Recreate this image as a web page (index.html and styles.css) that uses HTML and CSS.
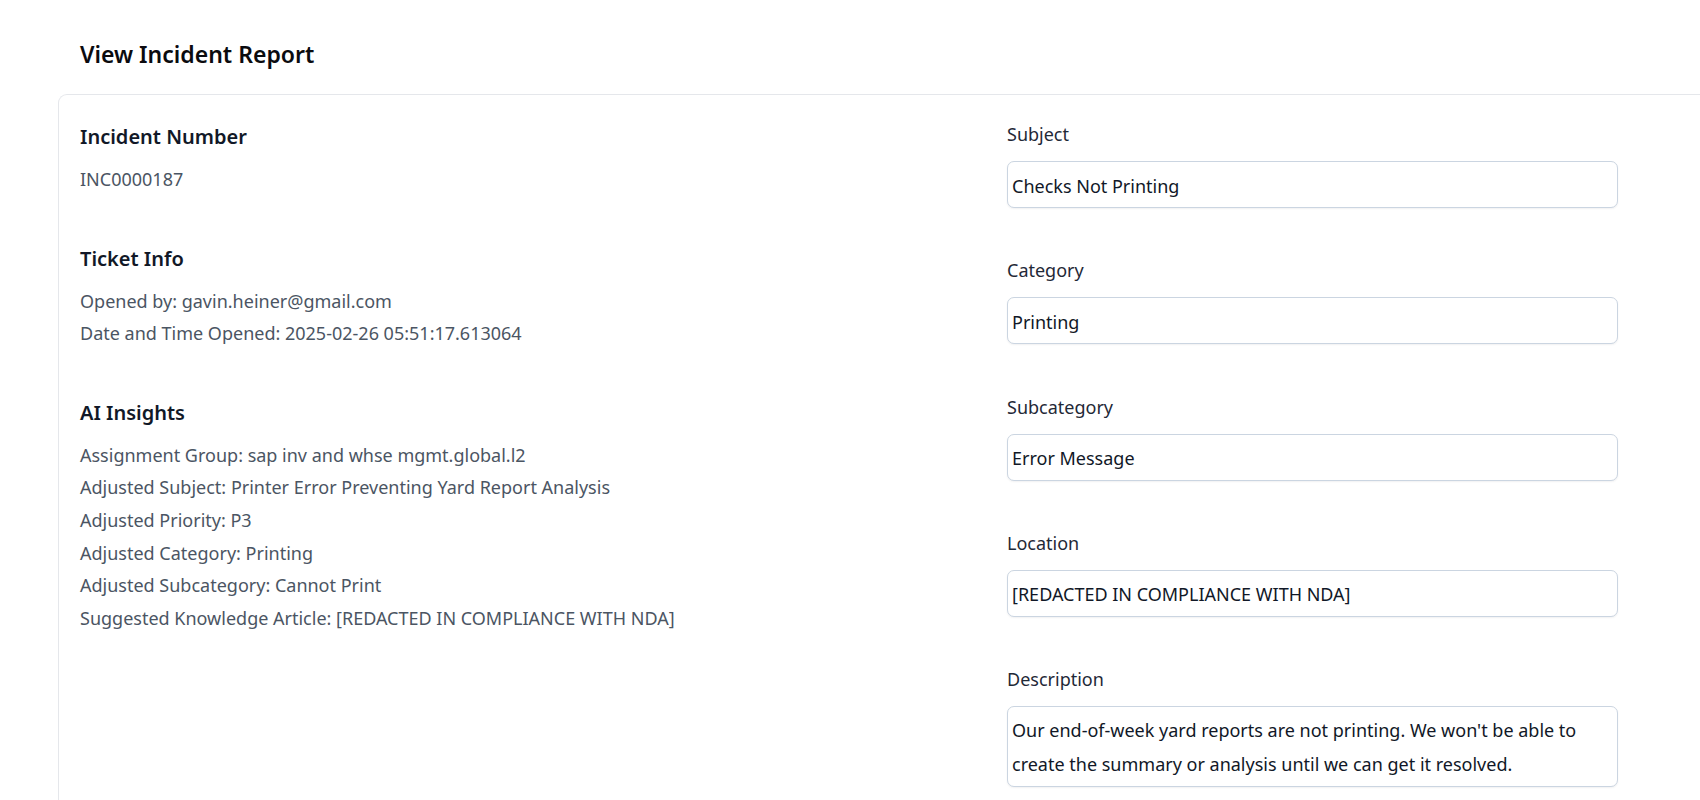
FILE: index.html
```html
<!DOCTYPE html>
<html lang="en">
<head>
<meta charset="utf-8">
<title>View Incident Report</title>
<link rel="stylesheet" href="styles.css">
</head>
<body>
<main class="page">
  <h1 class="page-title">View Incident Report</h1>
  <section class="card">
    <div class="info-col">
      <div class="info-section">
        <h2 class="info-title">Incident Number</h2>
        <p class="info-line">INC0000187</p>
      </div>
      <div class="info-section">
        <h2 class="info-title">Ticket Info</h2>
        <p class="info-line">Opened by: gavin.heiner@gmail.com</p>
        <p class="info-line">Date and Time Opened: 2025-02-26 05:51:17.613064</p>
      </div>
      <div class="info-section">
        <h2 class="info-title">AI Insights</h2>
        <p class="info-line">Assignment Group: sap inv and whse mgmt.global.l2</p>
        <p class="info-line">Adjusted Subject: Printer Error Preventing Yard Report Analysis</p>
        <p class="info-line">Adjusted Priority: P3</p>
        <p class="info-line">Adjusted Category: Printing</p>
        <p class="info-line">Adjusted Subcategory: Cannot Print</p>
        <p class="info-line">Suggested Knowledge Article: [REDACTED IN COMPLIANCE WITH NDA]</p>
      </div>
    </div>
    <form class="form-col">
      <div class="field">
        <label class="field-label" for="subject">Subject</label>
        <input class="field-input" id="subject" type="text" value="Checks Not Printing" readonly>
      </div>
      <div class="field">
        <label class="field-label" for="category">Category</label>
        <input class="field-input" id="category" type="text" value="Printing" readonly>
      </div>
      <div class="field">
        <label class="field-label" for="subcategory">Subcategory</label>
        <input class="field-input" id="subcategory" type="text" value="Error Message" readonly>
      </div>
      <div class="field">
        <label class="field-label" for="location">Location</label>
        <input class="field-input" id="location" type="text" value="[REDACTED IN COMPLIANCE WITH NDA]" readonly>
      </div>
      <div class="field">
        <label class="field-label" for="description">Description</label>
        <textarea class="field-input field-textarea" id="description" rows="2" readonly>Our end-of-week yard reports are not printing. We won't be able to create the summary or analysis until we can get it resolved.</textarea>
      </div>
    </form>
  </section>
</main>
</body>
</html>
```
FILE: styles.css
```css
* {
  box-sizing: border-box;
}

html, body {
  margin: 0;
  padding: 0;
  background: #ffffff;
  overflow: hidden;
}

body {
  font-family: "Noto Sans", "Open Sans", sans-serif;
  color: #111827;
}

.page {
  padding: 38px 0 0 58px;
}

.page-title {
  margin: 0 0 24px 0;
  padding-left: 22px;
  font-size: 23px;
  line-height: 32px;
  font-weight: 600;
  color: #0b0b0f;
}

.card {
  display: grid;
  grid-template-columns: 1fr 611px;
  border: 1px solid #e5e7eb;
  border-right: none;
  border-radius: 9px 0 0 9px;
  padding: 24px 82px 40px 21px;
  min-height: 760px;
  background: #ffffff;
}

.info-col {
  display: flex;
  flex-direction: column;
  gap: 45px;
}

.info-title {
  margin: 0 0 8px 0;
  font-size: 20px;
  line-height: 36px;
  font-weight: 600;
  color: #111827;
}

.info-line {
  margin: 0;
  font-size: 18px;
  line-height: 32.6px;
  color: #4b5563;
}

.form-col {
  display: flex;
  flex-direction: column;
  gap: 47.3px;
  margin: 0;
}

.field {
  display: flex;
  flex-direction: column;
}

.field-label {
  margin-bottom: 12px;
  font-size: 18px;
  line-height: 30px;
  color: #1f2937;
}

.field-input {
  display: block;
  width: 100%;
  height: 47px;
  margin: 0;
  padding: 7px 5px 5px 4px;
  border: 1px solid #cbd5e1;
  border-radius: 7px;
  background: #ffffff;
  box-shadow: 0 1px 2px rgba(15, 23, 42, 0.06);
  font-family: "Noto Sans", "Open Sans", sans-serif;
  font-size: 18px;
  line-height: 33px;
  color: #111827;
  outline: none;
}

.field-textarea {
  height: 81px;
  line-height: 33.5px;
  resize: none;
  overflow: hidden;
}
```
